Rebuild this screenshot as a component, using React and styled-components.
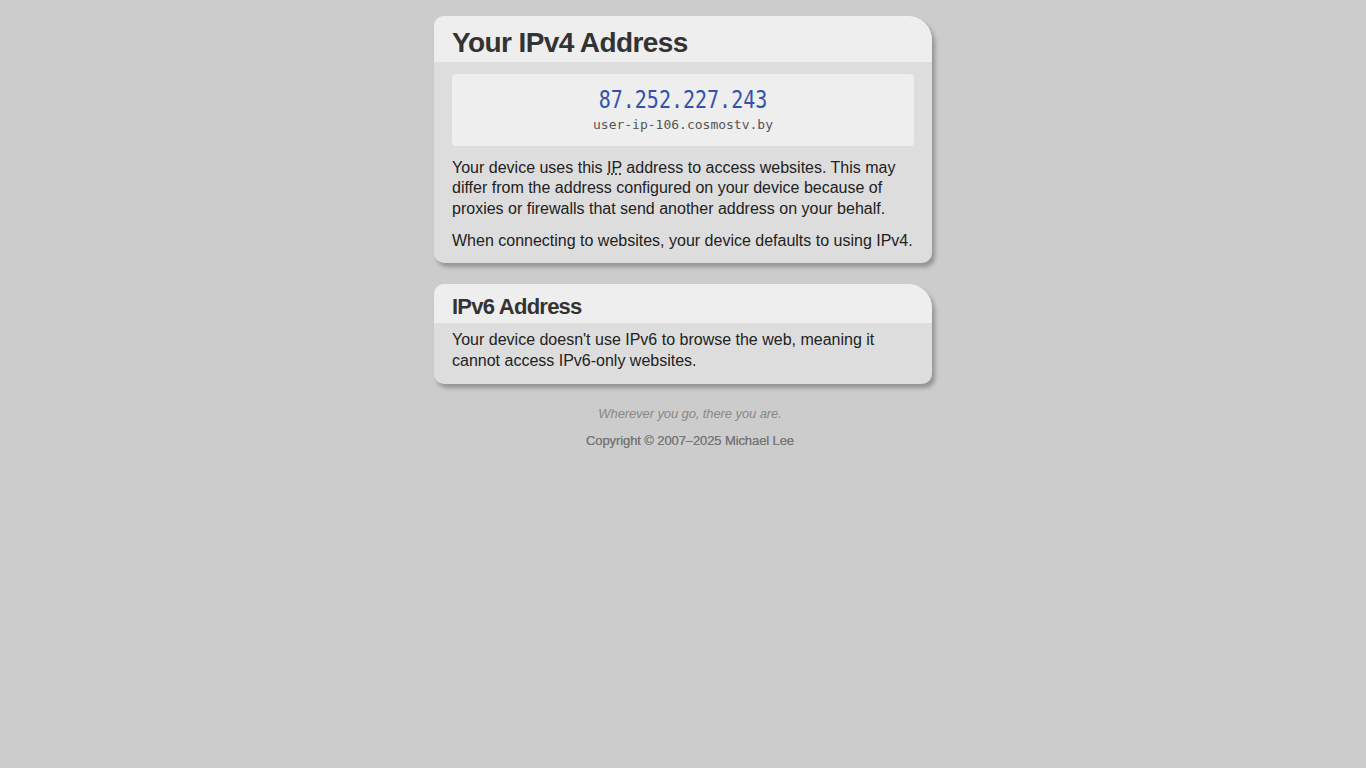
import React from "react"
import styled, { createGlobalStyle } from "styled-components"

const GlobalStyle = createGlobalStyle`
  html, body {
    margin: 0;
    padding: 0;
    background: #ccc;
  }
  body {
    font-family: "Liberation Sans", Arial, Helvetica, sans-serif;
    color: #222;
  }
`

const Page = styled.main`
  width: 498px;
  margin: 0 auto;
  padding-top: 16px;
  display: flex;
  flex-direction: column;
  gap: 21px;
`

const Card = styled.section`
  background: #ddd;
  border-radius: 10px 24px 10px 10px;
  box-shadow: 3px 4px 4px rgba(0, 0, 0, 0.28);
  overflow: hidden;
`

const Header = styled.header`
  background: #eee;
  padding: ${(p) => (p.$large ? "10px 18px 2px" : "10px 18px 3px")};
`

const Title = styled.h1`
  margin: 0;
  font-size: ${(p) => (p.$large ? "28px" : "22px")};
  letter-spacing: ${(p) => (p.$large ? "-0.6px" : "-0.75px")};
  line-height: 1.2;
  font-weight: bold;
  color: #333;
`

const Body = styled.div`
  padding: ${(p) => (p.$roomy ? "12px 18px 11px" : "7px 18px 12px")};
  display: flex;
  flex-direction: column;
  gap: 12px;
`

const AddressBox = styled.div`
  background: #eee;
  border-radius: 4px;
  padding: 12px 0 11px;
  display: flex;
  flex-direction: column;
  align-items: center;
`

const Address = styled.span`
  font-family: "DejaVu Sans Mono", "Liberation Mono", monospace;
  font-size: 20px;
  line-height: 29px;
  color: #3352aa;
  display: inline-block;
  transform: scaleY(1.22);
`

const Host = styled.span`
  font-family: "DejaVu Sans Mono", "Liberation Mono", monospace;
  font-size: 13px;
  line-height: 20px;
  color: #555;
`

const Text = styled.p`
  margin: 0;
  font-size: 16px;
  line-height: 20.6px;
  color: #222;

  abbr {
    text-decoration: underline dotted;
    cursor: help;
  }
`

const Footer = styled.footer`
  display: flex;
  flex-direction: column;
  align-items: center;
  gap: 10px;
  padding-left: 14px;
  font-size: 13px;
  line-height: 17px;
`

const Motto = styled.em`
  color: #888;
  letter-spacing: -0.1px;
`

const Copyright = styled.span`
  color: #777;
  letter-spacing: -0.1px;
  text-shadow: 0 0 0.3px #777;
`

const App = () => (
  <>
    <GlobalStyle />
    <Page>
      <Card>
        <Header $large>
          <Title $large>Your IPv4 Address</Title>
        </Header>
        <Body $roomy>
          <AddressBox>
            <Address>87.252.227.243</Address>
            <Host>user-ip-106.cosmostv.by</Host>
          </AddressBox>
          <Text>
            Your device uses this <abbr title="Internet Protocol">IP</abbr> address to access
            websites. This may differ from the address configured on your device because of
            proxies or firewalls that send another address on your behalf.
          </Text>
          <Text>When connecting to websites, your device defaults to using IPv4.</Text>
        </Body>
      </Card>

      <Card>
        <Header>
          <Title as="h2">IPv6 Address</Title>
        </Header>
        <Body>
          <Text>
            Your device doesn't use IPv6 to browse the web, meaning it cannot access
            IPv6-only websites.
          </Text>
        </Body>
      </Card>

      <Footer>
        <Motto>Wherever you go, there you are.</Motto>
        <Copyright>Copyright © 2007–2025 Michael Lee</Copyright>
      </Footer>
    </Page>
  </>
)

export default App
